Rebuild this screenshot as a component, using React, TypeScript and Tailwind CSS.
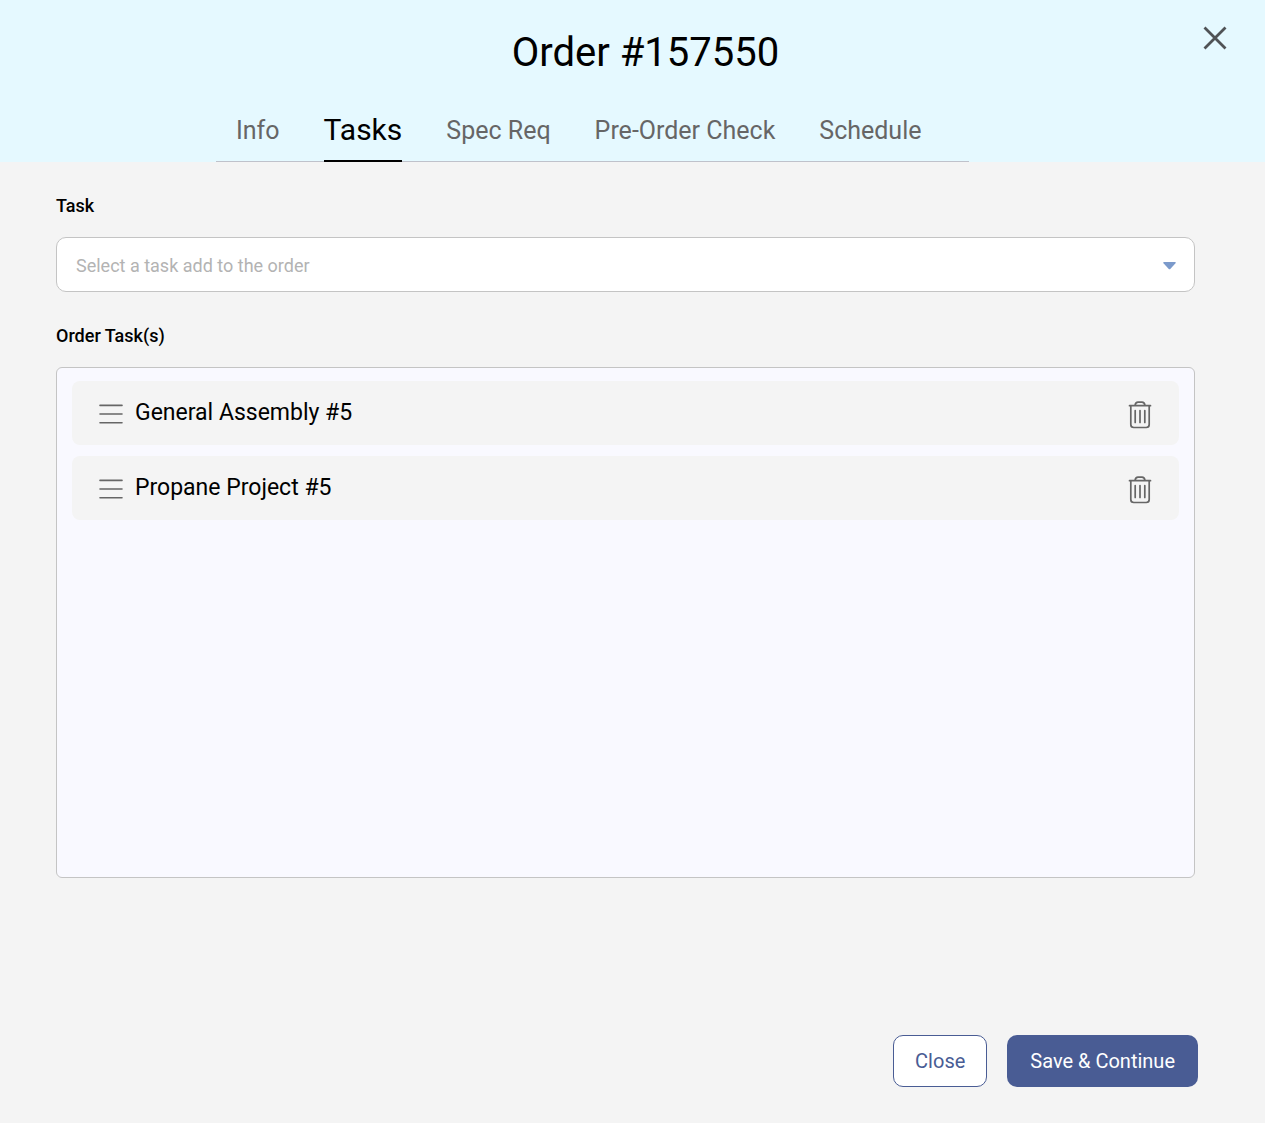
import React from 'react';

const tabs = ['Info', 'Tasks', 'Spec Req', 'Pre-Order Check', 'Schedule'];
const tasks = ['General Assembly #5', 'Propane Project #5'];

function CloseIcon() {
  return (
    <svg width="24" height="24" viewBox="0 0 24 24" fill="none" stroke="#505356" strokeWidth="2.8" aria-hidden="true">
      <path d="M1.500 1.500 22.500 22.500M22.500 1.500 1.500 22.500" />
    </svg>
  );
}

function GripIcon() {
  return (
    <svg width="24" height="20" viewBox="0 0 24 20" fill="none" stroke="#666" strokeWidth="1.6" strokeLinecap="round" aria-hidden="true">
      <path d="M1 1.400H23M1 10H23M1 18.700H23" />
    </svg>
  );
}

function TrashIcon() {
  return (
    <svg width="24" height="28" viewBox="0 0 24 28" fill="none" stroke="#666" strokeWidth="1.7" strokeLinecap="round" aria-hidden="true">
      <path d="M1.500 4.700H22.500M7 4.500Q7.500 1.200 10 1.200H14Q16.500 1.200 17 4.500" />
      <path d="M2.800 5V23.500Q2.800 26.500 5.800 26.500H18.200Q21.200 26.500 21.200 23.500V5" />
      <path d="M7.200 9.500V21.500M12 9.500V21.500M16.800 9.500V21.500" />
    </svg>
  );
}

export default function App() {
  return (
    <div className="flex min-h-screen flex-col bg-[#f4f4f4] font-['Roboto',sans-serif] text-black">
      <header className="relative bg-[#e5f9ff]">
        <h1 className="pt-6 pl-[26px] text-center text-[40px] leading-[58px]">Order #157550</h1>
        <button type="button" aria-label="Close dialog" className="absolute top-[26px] right-[38px]">
          <CloseIcon />
        </button>
        <nav className="mx-auto mt-[18px] flex h-[62px] w-[753px] -translate-x-10 gap-11 border-b border-[#bfc2cb] pl-5">
          {tabs.map((tab) => (
            <a
              key={tab}
              href="#"
              aria-current={tab === 'Tasks' ? 'page' : undefined}
              className={
                tab === 'Tasks'
                  ? '-mb-px border-b-2 border-black text-[30px] leading-[60px]'
                  : 'text-[25px] leading-[62px] text-[#666]'
              }
            >
              {tab}
            </a>
          ))}
        </nav>
      </header>
      <main className="flex-1 pt-8 pr-[70px] pl-14">
        <label htmlFor="task" className="block text-lg leading-6 font-medium">Task</label>
        <div className="relative mt-[19px]">
          <select id="task" defaultValue="" className="block h-[55px] w-full appearance-none rounded-[10px] border border-[#c4c4c4] bg-white px-[19px] pt-0.5 text-lg text-[#b3b3b3]">
            <option value="">Select a task add to the order</option>
          </select>
          <svg className="pointer-events-none absolute top-[25px] right-[19px]" width="13" height="8" viewBox="0 0 13 8" fill="#7b9acb" aria-hidden="true">
            <path d="M1 0H12Q13.500 0 12.500 1.200L7.500 6.800Q6.500 7.800 5.500 6.800L.5 1.200Q-.5 0 1 0Z" />
          </svg>
        </div>
        <h2 className="mt-8 text-lg leading-6 font-medium">Order Task(s)</h2>
        <ul className="mt-[19px] flex min-h-[511px] flex-col gap-[11px] rounded-md border border-[#c4c4c4] bg-[#f9f9ff] px-[15px] py-[13px]">
          {tasks.map((task) => (
            <li key={task} className="flex h-16 items-center rounded-lg bg-[#f4f4f4] px-[27px]">
              <button type="button" aria-label={`Reorder ${task}`} className="pt-0.5"><GripIcon /></button>
              <span className="ml-3 flex-1 text-[23px]">{task}</span>
              <button type="button" aria-label={`Delete ${task}`} className="pt-1"><TrashIcon /></button>
            </li>
          ))}
        </ul>
      </main>
      <footer className="flex justify-end gap-5 pr-[67px] pb-9 text-xl">
        <button type="button" className="h-13 rounded-[10px] border border-[#495c94] bg-white px-[21px] text-[#495c94]">Close</button>
        <button type="button" className="h-13 rounded-[10px] bg-[#495c94] px-[23px] text-white">Save &amp; Continue</button>
      </footer>
    </div>
  );
}
